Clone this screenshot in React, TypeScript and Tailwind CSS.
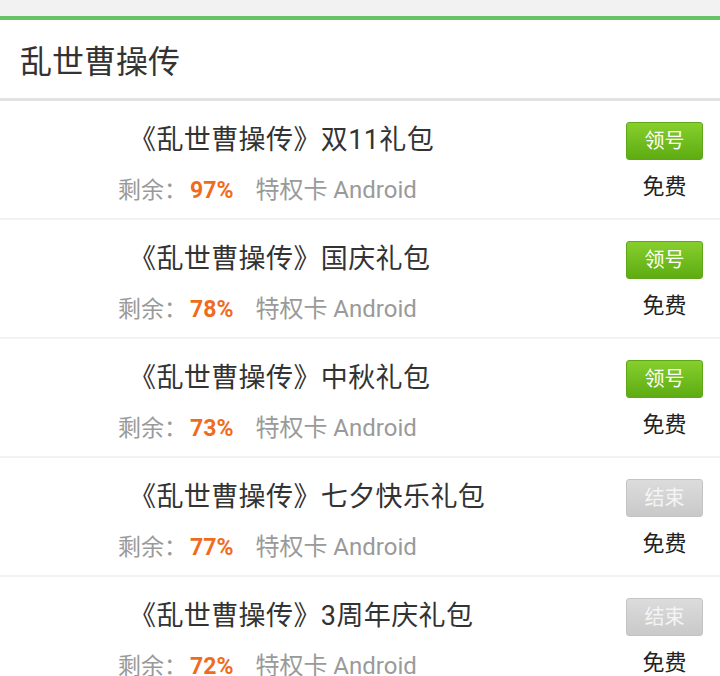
import React from "react";

type Gift = {
  name: string;
  left: number;
  open: boolean;
};

const gifts: Gift[] = [
  { name: "双11礼包", left: 97, open: true },
  { name: "国庆礼包", left: 78, open: true },
  { name: "中秋礼包", left: 73, open: true },
  { name: "七夕快乐礼包", left: 77, open: false },
  { name: "3周年庆礼包", left: 72, open: false },
];

const font = {
  fontFamily: "Roboto, 'Noto Sans CJK SC', 'Noto Sans', sans-serif",
};

function GiftRow({ gift }: { gift: Gift }) {
  return (
    <div className="flex h-[119px] border-b-2 border-[#f2f2f2] bg-white">
      <div className="flex-1 pt-[21px]">
        <div className="pl-[129px] text-[27px] leading-[36px] tracking-[0.4px] text-[#333] whitespace-nowrap">
          《乱世曹操传》{gift.name}
        </div>
        <div className="mt-[21px] pl-[118px] text-[23px] leading-[22px] text-[#9a9a9a] whitespace-nowrap">
          剩余：
          <span className="ml-[3px] font-bold text-[#ef6c1f]">{gift.left}%</span>
          <span className="ml-[22px] text-[24px]">特权卡 Android</span>
        </div>
      </div>
      <div className="mr-[17px] flex w-[77px] flex-col items-center pt-[21px]">
        {gift.open ? (
          <button className="h-[38px] w-[77px] rounded-[3px] border border-[#5ea61a] bg-gradient-to-b from-[#86cf2c] to-[#5eac12] text-[20px] leading-none text-white">
            领号
          </button>
        ) : (
          <button className="h-[38px] w-[77px] rounded-[3px] border border-[#c4c4c4] bg-gradient-to-b from-[#dcdcdc] to-[#c9c9c9] text-[20px] leading-none text-[#f4f4f4]">
            结束
          </button>
        )}
        <div className="mt-[13px] text-[22px] leading-[28px] text-[#222]">
          免费
        </div>
      </div>
    </div>
  );
}

export default function App() {
  return (
    <div className="h-[676px] w-[720px] overflow-hidden bg-white" style={font}>
      <div className="h-[16px] bg-[#f2f2f2]" />
      <div className="h-[4px] bg-[#68c266]" />
      <div className="flex h-[81px] items-center border-b-[3px] border-[#e2e2e2] pl-[20px] pt-[5px]">
        <h1 className="text-[32px] font-normal leading-none text-[#333]">
          乱世曹操传
        </h1>
      </div>
      {gifts.map((gift, i) => (
        <GiftRow key={i} gift={gift} />
      ))}
    </div>
  );
}
